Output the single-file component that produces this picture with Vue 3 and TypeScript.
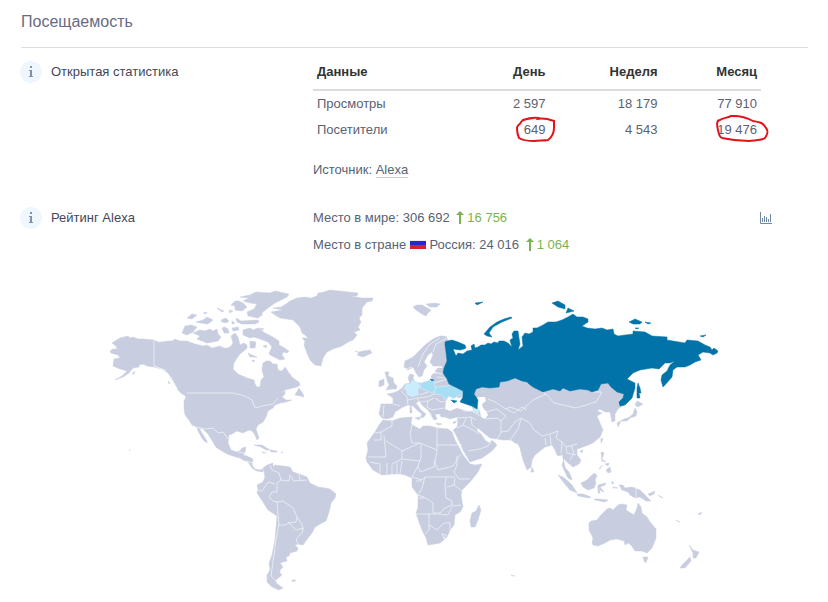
<script setup lang="ts">
interface StatRow {
  label: string
  day: string
  week: string
  month: string
  marked: boolean
}

const rows: StatRow[] = [
  { label: 'Просмотры', day: '2 597', week: '18 179', month: '77 910', marked: false },
  { label: 'Посетители', day: '649', week: '4 543', month: '19 476', marked: true },
]

const land: string[] = [
  // North America
  'M128 336L130 338 133 337 138 339 143 339 154 340 158 342 162 342 168 341 172 341 175 339 177 340 180 341 187 341 195 344 203 346 207 345 212 348 220 346 224 348 228 348 231 346 233 343 231 336 235 333 238 337 240 345 244 343 247 345 247 348 245 350 240 354 237 358 234 363 233 369 238 374 247 378 254 380 255 384 257 387 260 387 261 380 264 377 262 370 263 363 266 361 270 361 273 364 277 364 278 370 281 371 283 370 285 367 289 373 293 378 299 382 300 385 297 387 293 388 285 390 280 394 285 391 285 394 282 397 286 400 292 400 286 402 280 403 275 405 273 408 268 411 266 417 263 422 258 425 256 429 259 438 257 440 255 435 253 432 250 430 247 431 243 433 237 431 232 434 229 435 228 443 231 450 237 452 240 451 242 448 246 447 245 452 243 455 247 456 253 459 252 465 255 469 260 470 263 469 263 472 257 471 252 468 248 462 243 460 240 458 236 457 233 456 227 454 217 448 215 446 213 442 208 434 203 429 199 428 202 433 207 441 207 443 203 440 198 431 197 427 192 425 189 420 185 415 184 408 184 401 186 397 183 393 177 388 173 380 168 373 162 369 154 367 147 366 143 364 139 365 139 367 133 368 129 373 123 377 115 380 122 376 127 371 120 369 113 366 114 359 120 358 118 355 111 353 110 351 113 349 117 349 116 346 112 343 120 338Z',
  'M182 333L185 326 191 325 197 327 193 332 187 335Z',
  'M193 333L200 330 205 331 210 329 213 331 217 329 218 334 221 337 218 341 213 342 207 343 202 341 197 339 200 336Z',
  'M187 318L192 314 197 315 192 319Z M196 322L203 320 207 317 213 320 208 324 200 323Z M203 313L207 312 206 314Z',
  'M217 308L224 311 222 312Z M221 320L226 318 229 321 226 323 222 322Z M229 310L233 311 230 313Z M232 321L235 323 232 324Z',
  'M231 305L235 301 239 301 243 303 247 307 242 311 235 310 235 306Z',
  'M240 297L250 295 256 292 270 293 275 291 289 294 287 297 283 299 275 303 268 308 262 313 262 315 258 318 248 316 247 312 254 309 257 304 250 303 243 301 249 298Z',
  'M236 318L238 319 241 321 258 320 259 322 255 324 242 324 237 322Z',
  'M243 330L250 328 253 330 258 328 265 333 273 337 279 341 279 345 283 347 289 351 287 353 283 352 282 355 285 359 280 360 276 358 270 355 269 353 272 347 268 342 260 339 254 337 250 338 243 335Z',
  'M222 328L225 327 228 329 229 333 224 333Z M232 328L238 327 239 330 233 331Z M250 341L256 342 255 348 250 348Z M248 353L252 355 257 357 250 357Z M263 346L267 345 266 348Z M252 360L255 361 253 362Z M259 328L264 329 262 330Z',
  'M295 395L299 388 303 394 304 397 301 396Z M177 389L183 391 187 396 182 394Z M168 381L170 383 169 384Z M132 374L135 371 134 374Z',
  'M254 445L262 445 270 450 266 450 261 447Z M270 450L277 451 277 452 271 452Z M262 452L266 453 263 453Z M281 452L283 452 282 453Z M129 450L130 450 130 451Z',
  // Greenland and Iceland
  'M273 308L281 307 286 304 290 301 297 298 305 297 311 298 317 296 318 293 324 292 330 290 358 293 357 296 350 296 362 298 373 298 372 301 367 302 362 308 362 315 359 318 361 322 358 327 360 330 354 332 357 335 353 340 348 342 342 346 333 349 327 352 323 358 321 366 315 365 310 360 307 353 304 345 305 341 302 338 308 338 305 335 302 333 300 327 293 320 280 318 275 315 271 312 283 310Z',
  'M355 351L359 352 363 351 370 350 372 353 363 357 357 355 359 353Z',
  // South America
  'M263 468L267 465 273 463 273 467 275 465 283 466 290 467 293 472 302 475 307 477 310 483 318 487 325 488 330 489 336 494 335 498 331 503 330 508 329 512 326 521 322 523 315 527 312 533 308 538 303 545 298 544 295 545 298 548 297 551 290 553 289 556 286 557 287 561 283 562 280 563 283 567 280 570 280 573 282 575 276 580 276 583 283 588 279 590 272 587 267 582 267 575 270 570 269 563 272 555 275 540 276 528 277 516 268 510 263 502 257 493 258 489 257 485 263 482 265 477 264 471Z M292 580L296 580 293 582Z',
  // Europe, Asia and Arabia
  'M447 337L444 336 440 336 433 339 425 345 418 352 413 357 405 361 404 367 408 370 413 367 416 373 419 377 422 376 424 370 427 366 424 362 428 355 432 352 433 355 430 362 433 366 442 366 443 368 438 368 435 371 438 374 434 373 431 376 432 379 430 381 425 382 420 383 415 382 413 378 414 375 410 374 408 378 410 383 405 384 402 388 398 391 393 393 387 394 393 398 393 404 381 404 379 414 382 418 387 419 393 417 395 412 403 407 408 405 413 406 418 411 422 414 420 418 424 417 426 414 421 410 416 403 419 401 423 406 428 410 431 415 434 420 437 419 435 414 440 414 441 417 445 417 450 419 457 417 458 422 457 427 453 430 455 433 460 443 463 450 470 462 482 458 492 451 497 445 492 440 489 443 485 440 481 434 477 431 478 428 485 434 490 438 497 439 503 440 511 440 515 443 518 444 520 448 523 460 527 470 531 467 532 460 535 455 540 451 545 447 552 445 555 450 557 455 560 456 562 454 564 462 565 467 570 475 572 480 568 478 564 470 562 465 564 459 567 462 573 467 579 464 581 460 577 455 577 449 583 447 593 443 600 437 603 430 600 423 597 416 602 413 597 411 600 409 605 412 610 412 612 422 615 421 615 414 618 409 624 405 627 395 605 375 500 365 450 365Z',
  'M385 372L389 372 388 376 393 378 394 383 397 386 396 389 392 389 386 390 389 385 387 380Z M379 381L384 379 384 385 379 387Z M413 307L417 305 422 305 431 310 428 313 426 316 422 314 416 310Z M426 304L435 303 440 304 437 307 430 307Z M411 405L412 413 410 413 410 407Z M415 418L420 417 419 420Z M436 423L442 424 438 425Z M453 422L457 421 454 424Z',
  // Africa and Madagascar
  'M383 420L392 421 400 418 412 417 411 423 412 425 420 429 423 426 430 426 437 428 448 429 452 432 455 440 460 449 463 455 470 464 475 465 482 464 478 472 470 482 462 490 461 495 463 507 460 512 455 515 454 525 450 530 447 537 440 543 435 544 428 545 426 538 422 530 419 522 416 513 418 508 418 503 418 495 412 487 412 478 405 475 400 474 392 474 382 475 373 470 367 462 366 458 368 450 367 443 375 432 379 425Z',
  'M479 505L481 510 478 520 475 527 471 527 470 521 472 513 476 511Z',
  // East and South-East Asia
  'M637 401L643 404 638 407 635 405Z M635 408L637 411 636 416 630 418 627 421 621 421 618 427 617 423 624 419 628 418 633 414Z M601 438L603 439 601 443Z M580 451L583 450 582 453Z M532 467L534 472 531 472Z',
  'M558 475L563 477 569 482 572 485 577 493 570 490 564 483Z M577 494L583 494 591 497 589 498 578 496Z M581 483L587 480 592 475 595 473 597 476 595 480 596 483 594 488 588 490 583 487Z M566 469L569 472 572 480 569 478Z M594 499L600 499 608 500 605 502 595 500Z',
  'M598 485L606 483 605 485 600 487 604 492 601 491 599 488 600 493 598 493Z M601 452L604 453 602 459 606 462 602 461Z M606 470L610 467 611 472 608 473Z M605 464L609 463 608 466Z M599 469L602 465 600 469Z M612 481L614 483 612 484Z M613 487L618 488 613 488Z',
  'M619 485L623 485 625 488 632 487 640 490 645 495 651 501 646 501 640 497 635 498 630 495 628 492 622 490Z M648 494L655 491 654 494 650 496Z M658 495L663 498 660 497Z M676 520L680 522 677 521Z M698 514L702 512 700 515Z M511 575L515 576 513 576Z',
  // Australia and New Zealand
  'M589 523L591 521 597 520 600 516 607 509 610 508 613 510 618 505 621 504 627 505 626 510 634 515 637 508 638 503 641 507 642 513 647 517 650 522 656 529 656 538 652 548 647 553 642 551 635 551 631 545 628 543 625 545 624 541 617 539 610 540 605 543 598 546 593 545 592 543 593 538 589 530Z',
  'M643 557L648 557 646 563 644 561Z M689 545L693 550 699 552 696 558 693 558 693 553Z M690 557L691 561 685 568 680 568 682 565Z',
]

const borders: string[] = [
  'M154 340V366L165 370 177 388M187 393H233L245 396 252 400 255 408 262 406 273 404 278 398',
  'M197 427L205 429 213 428 218 433 223 432 228 439M239 453L243 452 245 455M246 461L253 463',
  'M270 465L272 470 279 473 281 480 277 483 277 492 272 492 269 497 273 501 277 502 278 515 279 524 276 540 273 562 271 576 276 581M258 490L262 491 268 482 275 484M277 502L283 501 293 508 297 517 296 522 288 523 286 525 279 525M281 480L289 481 290 475 294 481 307 480M299 474L300 480M288 522L296 530 303 528 302 533 296 539 298 544M297 517L302 524 303 530',
  'M392 421L392 426 381 432 375 433M381 432V440H374M384 436L386 457H368M386 441L402 451 420 443 437 450V428M412 425L410 434 412 443 420 443M437 445H462M421 444V457L418 466 420 472 434 467 437 450M402 451V459L392 464M402 459L420 461M434 460L438 470 453 466 460 455M370 462L380 464 380 473M387 463V474M392 465V474M397 463V474M402 461L400 474M418 466L412 477 422 480 425 477 455 477M457 456L457 465 454 472 459 479 470 479M425 477L422 488 418 495 424 497M417 498H426L433 503 433 513M446 477L445 485 446 498 452 501 452 505 445 508 440 513 433 513M455 478L454 485 447 487M454 485L462 491M461 505L452 506M416 514H437M429 514V530L425 534M429 525L437 530 444 523 450 523M438 514L448 515 452 507M450 522L450 530M416 481H422M442 534L446 535 444 539Z',
  'M418 367L423 354 430 344 440 338M447 338L436 344 433 352M406 369L412 367M407 384L403 391M401 391L407 397 408 405M393 404L400 406M384 405L383 417M408 400L417 398 427 397 435 394M420 395L428 392M417 398L420 402 428 401 434 398M428 401L427 407 432 410 444 408M428 411L432 415M435 398L441 402 447 401M434 383L447 379M437 377L446 378M436 373L444 374',
  'M463 411L472 411 480 416M457 418L471 417 472 425 478 430M466 418L463 425 457 428M463 425L473 430 479 434M468 451L480 449 488 446 492 440M471 417L476 420M486 419L497 418 501 421 501 433 497 439M486 412L497 409 506 416 501 421M488 399L495 402 506 409 514 413M506 409L510 407 521 411 533 400 546 394 542 392M514 413L522 407 527 410M501 432L508 431 515 422 521 418 530 423 533 429 542 436 550 434 558 431M510 440L518 429 521 419M546 394L554 403 576 408 596 402 602 392 592 392M545 438L546 445M550 435L551 445M558 431L556 438 562 442 566 447 577 444M562 442L561 453M566 447L567 453 576 455M571 445L574 453 570 460',
  'M636 487V498',
]

const russia: string[] = [
  'M445 342L447 341 452 340 458 342 465 345 466 348 464 349 460 350 453 349 456 356 458 353 463 354 467 351 472 350 471 346 474 344 475 348 478 347 481 345 485 345 488 343 491 344 494 342 498 343 499 341 504 341 508 343 512 347 511 344 510 340 513 338 512 334 514 331 518 331 519 338 520 344 518 350 523 346 522 337 525 333 529 334 533 332 533 328 537 328 543 325 548 322 556 322 562 320 568 317 573 314 577 317 583 317 588 319 588 322 582 326 587 328 595 329 602 328 607 330 613 329 614 334 618 336 625 335 633 334 633 331 645 332 652 336 667 337 667 340 685 343 687 340 698 341 705 345 710 347 712 350 714 348 718 351 717 353 713 355 710 353 703 352 698 355 701 360 695 362 690 365 685 367 677 367 673 370 672 377 665 385 663 387 661 380 662 375 667 371 670 365 675 361 670 363 665 363 659 369 652 368 640 370 633 373 627 379 635 383 635 388 632 398 625 405 620 406 619 402 623 398 624 394 617 392 611 387 608 383 601 384 598 390 592 392 588 390 580 389 570 391 563 388 560 391 553 389 543 392 533 387 529 384 527 382 522 381 515 378 507 381 500 382 499 387 490 388 482 387 476 389 474 394 478 400 477 409 472 406 460 402 463 397 463 391 455 387 449 384 447 379 443 373 444 368 447 361 446 352 445 345Z',
  'M484 334L490 327 497 322 504 319 511 317 512 318 502 322 493 327 489 333 492 337 487 336Z',
  'M552 303L558 301 565 305 565 309 558 307Z M568 308L574 311 566 313Z M475 303L483 302 477 305Z M629 322L635 319 642 322 640 324 633 324Z M645 322L651 323 648 324Z M635 328L639 328 637 329Z M700 336L706 335 703 337Z M638 383L640 388 641 393 639 393 640 398 637 398 637 388Z M451 400L457 401 454 403Z M430 379L434 380 432 381Z',
]

const medium: string[] = [
  'M421 383L430 380 434 382 436 390 432 393 425 390 420 388Z',
  'M436 387L447 386 452 385 455 388 463 391 462 395 457 396 454 399 448 396 445 400 442 395 435 394 434 391Z',
]

const light: string[] = [
  'M406 383L410 384 412 380 418 382 420 387 418 390 419 395 412 397 407 395 405 388Z',
  'M472 409L478 408 480 411 478 414 474 412Z',
]

const seas: string[] = [
  'M446 401L449 396 455 396 458 398 464 397 463 403 472 407 474 411 467 411 457 408 450 411 445 409Z',
  'M475 399L479 397 485 397 486 401 482 404 483 408 486 411 488 415 485 419 481 417 480 411 476 405Z',
]
</script>

<template>
  <main class="page">
    <h1 class="title">Посещаемость</h1>

    <section class="row">
      <h2 class="label">
        <svg class="info" viewBox="0 0 22 22" aria-hidden="true">
          <circle cx="11" cy="11" r="11" fill="#eff6fe" />
          <path d="M10 5h2v2h-2zM9 9h3v6h1v1H9v-1h1v-5H9z" fill="#8290ab" />
        </svg>
        Открытая статистика
      </h2>
      <div class="content">
        <table class="stats">
          <thead>
            <tr>
              <th scope="col">Данные</th>
              <th scope="col">День</th>
              <th scope="col">Неделя</th>
              <th scope="col">Месяц</th>
            </tr>
          </thead>
          <tbody>
            <tr v-for="row in rows" :key="row.label">
              <td>{{ row.label }}</td>
              <td>
                <span class="value">
                  {{ row.day }}
                  <svg v-if="row.marked" class="mark mark-day" viewBox="0 0 42 28" aria-hidden="true">
                    <path d="M19 2C13 3 8 3 6 6C5 9 2 9 2 12C2 16 3 20 4 22C9 25 14 25 19 25C24 24 28 25 33 24C37 21 39 17 39 12L39 5C33 3 27 2 22 3M8 4C14 2 18 1 24 2" />
                  </svg>
                </span>
              </td>
              <td>{{ row.week }}</td>
              <td>
                <span class="value">
                  {{ row.month }}
                  <svg v-if="row.marked" class="mark mark-month" viewBox="0 0 54 28" aria-hidden="true">
                    <path d="M22 2L16 2C12 4 8 4 5 6C1 6 2 12 3 16C4 20 4 23 7 24C16 26 26 27 34 27C42 26 48 26 50 24C53 20 53 16 51 14C48 8 43 8 38 7C31 3 26 2 18 2" />
                  </svg>
                </span>
              </td>
            </tr>
          </tbody>
        </table>
        <p class="source">Источник: <a href="#alexa">Alexa</a></p>
      </div>
    </section>

    <section class="row">
      <h2 class="label">
        <svg class="info" viewBox="0 0 22 22" aria-hidden="true">
          <circle cx="11" cy="11" r="11" fill="#eff6fe" />
          <path d="M10 5h2v2h-2zM9 9h3v6h1v1H9v-1h1v-5H9z" fill="#8290ab" />
        </svg>
        Рейтинг Alexa
      </h2>
      <div class="content ranks">
        <div class="rank-list">
          <p>
            Место в мире: 306 692
            <span class="up"><svg viewBox="0 0 8 13" aria-hidden="true"><path d="M3 13V4H0L4 0L8 4H5V13Z" /></svg>16 756</span>
          </p>
          <p>
            Место в стране
            <svg class="flag" viewBox="0 0 16 9" role="img" aria-label="Флаг России">
              <path d="M0 0h16v3H0z" fill="#e9e9f2" />
              <path d="M0 1h16v5H0z" fill="#2c22d8" />
              <path d="M0 5h16v4H0z" fill="#dc2026" />
            </svg>
            Россия: 24 016
            <span class="up"><svg viewBox="0 0 8 13" aria-hidden="true"><path d="M3 13V4H0L4 0L8 4H5V13Z" /></svg>1 064</span>
          </p>
        </div>
        <button class="chart" type="button" aria-label="График">
          <svg viewBox="0 0 12 12" aria-hidden="true">
            <path d="M.5 0V11.5H12M2.5 6V10M4.5 4V10M6.5 5V10M8.5 7V10M10.5 2V10" />
          </svg>
        </button>
      </div>
    </section>

    <svg class="map" viewBox="21 280 787 316" role="img" aria-label="Карта посещаемости">
      <g class="land"><path v-for="d in land" :key="d" :d="d" /></g>
      <g class="seas"><path v-for="d in seas" :key="d" :d="d" /></g>
      <g class="borders"><path v-for="d in borders" :key="d" :d="d" /></g>
      <g class="medium"><path v-for="d in medium" :key="d" :d="d" /></g>
      <g class="light"><path v-for="d in light" :key="d" :d="d" /></g>
      <g class="russia"><path v-for="d in russia" :key="d" :d="d" /></g>
    </svg>
  </main>
</template>

<style>
body {
  margin: 0;
  background: #fff;
}
</style>

<style scoped>
.page {
  padding: 11px 20px 0 21px;
  font: 13px/22px "Liberation Sans", Arial, sans-serif;
  color: #596273;
}

.title {
  margin: 0 0 13px;
  padding-bottom: 14px;
  border-bottom: 1px solid #dedede;
  font-size: 16px;
  font-weight: 400;
  color: #676b83;
}

.row {
  display: grid;
  grid-template-columns: 371fr 629fr;
}

.row + .row {
  margin-top: 26px;
}

.label {
  display: flex;
  align-items: flex-start;
  gap: 9px;
  margin: 0;
  font-size: 13px;
  font-weight: 400;
  color: #43475a;
}

.info {
  width: 22px;
  height: 22px;
  margin-left: -1px;
}

.content {
  margin-right: 36px;
}

.stats {
  width: calc(100% - 11px);
  border-collapse: collapse;
  table-layout: fixed;
}

th,
td {
  padding: 0 4px;
  line-height: 26px;
  text-align: right;
}

th {
  width: 22%;
  padding-bottom: 6px;
  border-bottom: 2px solid #dcdcdc;
  line-height: 22px;
  color: #333;
}

th:first-child {
  width: 31%;
}

th:nth-child(3) {
  width: 25%;
}

th:first-child,
td:first-child {
  text-align: left;
}

.value {
  position: relative;
}

.mark {
  position: absolute;
  overflow: visible;
  fill: none;
  stroke: #e3131c;
  stroke-width: 2;
  stroke-linecap: round;
}

.mark-day {
  right: -11px;
  top: -6px;
  width: 42px;
  height: 28px;
}

.mark-month {
  right: -12px;
  top: -8px;
  width: 54px;
  height: 28px;
}

.source {
  margin: 16px 0 0;
}

.source a {
  border-bottom: 1px solid #ccd0d6;
  color: inherit;
  text-decoration: none;
}

.ranks {
  display: flex;
  justify-content: space-between;
  align-items: flex-start;
}

.rank-list {
  display: grid;
  gap: 5px;
}

.rank-list p {
  margin: 0;
}

.up {
  margin-left: 3px;
  color: #7cb251;
}

.up svg {
  width: 8px;
  height: 13px;
  margin-right: 3px;
  vertical-align: -2px;
  fill: currentColor;
}

.flag {
  width: 16px;
  height: 9px;
}

.chart {
  display: block;
  margin: 5px 0 0;
  padding: 0;
  border: 0;
  background: none;
}

.chart svg {
  display: block;
  width: 12px;
  height: 12px;
  fill: none;
  stroke: #7187a6;
}

.map {
  display: block;
  width: 100%;
  margin-top: 24px;
  stroke-linejoin: round;
}

.land {
  fill: #c8cee0;
  stroke: #c8cee0;
  stroke-width: 0.5;
}

.seas {
  fill: #fff;
}

.borders {
  fill: none;
  stroke: #eef1f8;
  stroke-width: 0.8;
}

.medium {
  fill: #a6def4;
  stroke: #e2f4fc;
  stroke-width: 0.5;
}

.light {
  fill: #c9edfc;
}

.russia {
  fill: #0273a8;
  stroke: #0273a8;
  stroke-width: 0.5;
}
</style>
